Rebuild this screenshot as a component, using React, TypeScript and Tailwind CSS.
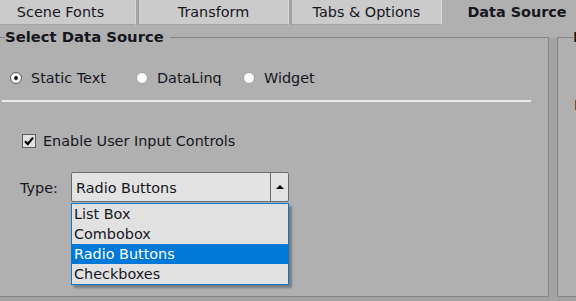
const tabs = ['Scene Fonts', 'Transform', 'Tabs & Options'];
const sources = [
  { label: 'Static Text', checked: true, w: 'w-[126px]' },
  { label: 'DataLinq', checked: false, w: 'w-[107px]' },
  { label: 'Widget', checked: false, w: 'w-[100px]' },
];
const options = ['List Box', 'Combobox', 'Radio Buttons', 'Checkboxes'];

function Radio({ checked }: { checked: boolean }) {
  return (
    <span
      className={
        checked
          ? 'w-[12px] h-[12px] rounded-full border border-[#555] bg-white flex items-center justify-center'
          : 'w-[12px] h-[12px] rounded-full border border-[#a0a0a0] bg-white flex items-center justify-center'
      }
    >
      {checked && <span className="w-[4px] h-[4px] rounded-full bg-[#151515]" />}
    </span>
  );
}

export default function App() {
  return (
    <div className="w-[576px] h-[301px] overflow-hidden bg-[#b0b0b0] font-['DejaVu_Sans',sans-serif] text-[14.4px] text-[#16161e] leading-none select-none">
      {/* tab strip */}
      <div className="flex h-[25px] -ml-[14px]">
        {tabs.map((t, i) => (
          <div key={t} className="flex shrink-0">
            <div className="w-[150px] flex items-center justify-center bg-[#cbcbcb] border-b border-[#a4a4a4] border-r border-r-[#dadada]">
              {t}
            </div>
            {i < tabs.length - 1 && <div className="w-[3px] bg-[#a3a3a3]" />}
          </div>
        ))}
        <div className="w-[150px] shrink-0 flex items-center justify-center font-bold">Data Source</div>
      </div>

      <div className="flex flex-col h-[276px]">
        <div className="flex h-[272px]">
          <fieldset className="w-[549px] shrink-0 mt-[3px] h-[269px] border-y border-r border-[#858585] relative">
            <legend className="ml-[5px] pr-[6px] font-bold text-[14.8px] leading-[19px] relative -top-[1px]">Select Data Source</legend>

            <div className="flex items-center h-[20px] mt-[21px] pl-[10px]">
              {sources.map((s) => (
                <div key={s.label} className={`${s.w} flex items-center shrink-0`}>
                  <Radio checked={s.checked} />
                  <span className="ml-[9px] pt-[1px]">{s.label}</span>
                </div>
              ))}
            </div>

            <div className="h-[2px] w-[529px] ml-[2px] mt-[12px] bg-[#ececec]" />

            <div className="flex items-center h-[16px] mt-[31px] pl-[22px]">
              <span className="w-[14px] h-[14px] border border-[#5c5c5c] bg-[#e2e2e2] flex items-center justify-center">
                <svg width="12" height="12" viewBox="0 0 12 12">
                  <path d="M2 6.2 L4.8 9 L10 2.6" fill="none" stroke="#000" strokeWidth="2.2" />
                </svg>
              </span>
              <span className="ml-[7px] pt-[1px]">Enable User Input Controls</span>
            </div>

            <div className="flex items-center h-[30px] mt-[23px] pl-[20px]">
              <span className="w-[51px] shrink-0 pt-[2px]">Type:</span>
              <div className="relative w-[218px] h-[30px]">
                <div className="flex h-full border border-[#6b6b6b] rounded-[2px] bg-[#e3e3e3]">
                  <div className="flex-1 flex items-center pl-[4px] pt-[2px]">Radio Buttons</div>
                  <div className="w-[18px] border-l border-[#6b6b6b] flex items-center justify-center">
                    <span className="w-0 h-0 border-x-[4px] border-x-transparent border-b-[4px] border-b-black" />
                  </div>
                </div>
                <div className="absolute left-0 top-[31px] w-[218px] border border-[#0078d7] bg-[#e1e1e1] shadow-[3px_3px_2px_rgba(0,0,0,0.3)] z-10">
                  {options.map((o) => (
                    <div
                      key={o}
                      className={
                        o === 'Radio Buttons'
                          ? 'h-[20px] flex items-center pl-[2px] pt-[1px] bg-[#0078d7] text-white'
                          : 'h-[20px] flex items-center pl-[2px] pt-[1px]'
                      }
                    >
                      {o}
                    </div>
                  ))}
                </div>
              </div>
            </div>
          </fieldset>

          <div className="w-[8px] shrink-0 mt-[13px] bg-[#a3a3a3]" />

          <fieldset className="flex-1 mt-[3px] h-[269px] border-y border-l border-[#858585]">
            <legend className="ml-[15px] pr-[6px] font-bold text-[14.8px] leading-[19px] relative -top-[1px]">Properties</legend>
            <div className="mt-[50px] pl-[16px] h-[16px] flex items-center whitespace-nowrap">Name:</div>
          </fieldset>
        </div>
        <div className="h-[4px] bg-[#a3a3a3]" />
      </div>
    </div>
  );
}
